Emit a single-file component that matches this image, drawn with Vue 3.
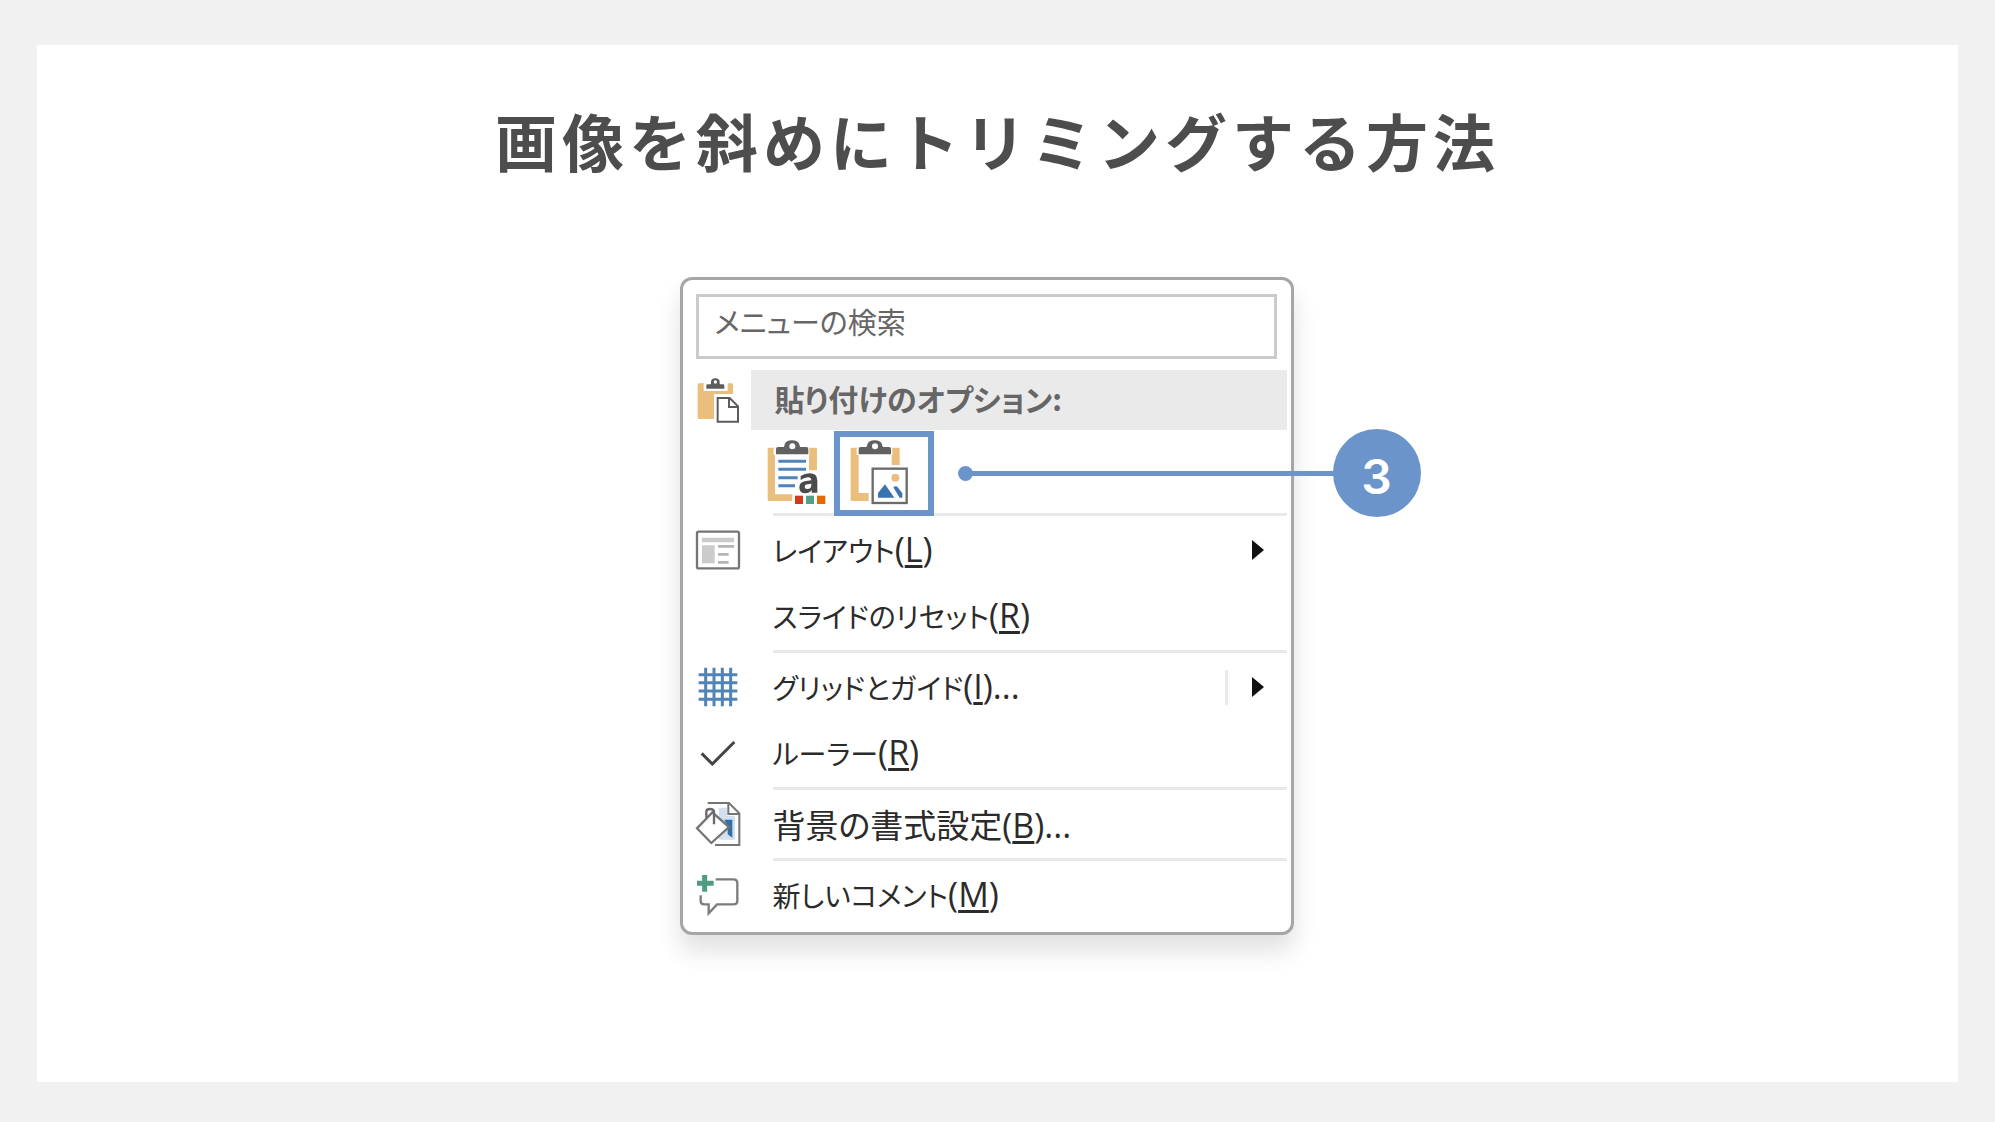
<script setup>
const title = '画像を斜めにトリミングする方法'

const groups = [
  [
    { icon: 'layout', label: 'レイアウト', key: 'L', arrow: true },
    { icon: '', label: 'スライドのリセット', key: 'R' },
  ],
  [
    { icon: 'grid', label: 'グリッドとガイド', key: 'I', more: true, arrow: true, split: true },
    { icon: 'check', label: 'ルーラー', key: 'R' },
  ],
  [{ icon: 'background', label: '背景の書式設定', key: 'B', more: true, kanji: true }],
  [{ icon: 'comment', label: '新しいコメント', key: 'M' }],
]
</script>

<template>
  <main class="page">
    <section class="panel">
      <h1 class="title">{{ title }}</h1>

      <div class="menu">
        <input class="search" type="text" placeholder="メニューの検索" aria-label="メニューの検索" />

        <div class="header">
          <span class="icon">
            <svg width="46" height="48" viewBox="0 0 138 144" aria-hidden="true">
              <path d="M8 26q0-4 4-4h16v22h70v-22h12q4 0 4 4v28H57v75H12q-4 0-4-4z" fill="#eabf7d" />
              <path d="M30 40V28h15v-6q0-12 16-12t16 12v6h15v12z" fill="#fff" stroke="#fff" stroke-width="8" />
              <path d="M34 38V29q0-4 4-4h10v-7q0-11 13-11t13 11v7h10q4 0 4 4v9z" fill="#5c5c5c" />
              <circle cx="61" cy="18" r="5" fill="#fff" />
              <path d="M68 66h36l25 25v46H68z" fill="#fff" stroke="#5c5c5c" stroke-width="6" />
              <path d="M102 66v27h27" fill="none" stroke="#5c5c5c" stroke-width="6" />
            </svg>
          </span>
          <span class="header-label">貼り付けのオプション:</span>
        </div>

        <div class="paste">
          <button class="paste-btn" type="button" aria-label="貼り付け先のテーマを使用">
            <svg width="60" height="66" viewBox="0 0 180 198" aria-hidden="true">
              <path d="M2 30q0-4 4-4h18v136h52v24H6q-4 0-4-4zM126 26h20q4 0 4 4v64h-24z" fill="#eabf7d" />
              <path d="M24 26h102v70l-30 70H24z" fill="#fff" />
              <path d="M20 48V28h24q4-24 31-24t32 24h20v20z" fill="#fff" />
              <path d="M27 46V30q0-6 6-6h17q3-3 3-8 4-12 22-12t22 12q0 5 3 8h18q6 0 6 6v16z" fill="#616161" />
              <circle cx="76" cy="22" r="9" fill="#fff" />
              <path d="M34 67h83M34 91h83M34 116h58M34 140h50" stroke="#4e84b8" stroke-width="9" />
              <path d="M101 111q12-8 27-8 23 0 23 22v36h-17v-8q-7 10-19 10-18 0-18-18 0-17 20-19l16-2q0-9-10-9-11 0-22 8zM133 134l-11 2q-9 1-9 8 0 6 8 6 12 0 12-13z" fill="#4b4b4b" fill-rule="evenodd" />
              <path d="M84 170h24v25H84z" fill="#d13b1c" />
              <path d="M117 170h24v25h-24z" fill="#53a086" />
              <path d="M150 170h25v25h-25z" fill="#e56a06" />
            </svg>
          </button>
          <button class="paste-btn selected" type="button" aria-label="図">
            <svg width="60" height="66" viewBox="0 0 180 198" aria-hidden="true">
              <path d="M2 30q0-4 4-4h20v136h30v24H6q-4 0-4-4zM125 26h20q4 0 4 4v48h-24z" fill="#eabf7d" />
              <path d="M20 48V28h24q4-24 31-24t32 24h20v20z" fill="#fff" />
              <path d="M26 46V30q0-6 6-6h17q3-3 3-8 4-12 22-12t22 12q0 5 3 8h18q6 0 6 6v16z" fill="#616161" />
              <circle cx="75" cy="22" r="9" fill="#fff" />
              <rect x="68" y="89" width="102" height="103" fill="#fff" stroke="#6b6b6b" stroke-width="7" />
              <circle cx="136" cy="116" r="12" fill="#eabf7d" />
              <path d="M84 176v-14l21-26 28 40z" fill="#3a74b0" />
              <path d="M130 145q6-6 12-2l15 20v13h-8z" fill="#3a74b0" />
            </svg>
          </button>

          <div class="callout">
            <span class="dot"></span>
            <span class="line"></span>
            <span class="badge">3</span>
          </div>
        </div>

        <template v-for="(group, g) in groups" :key="g">
          <hr class="rule" />
          <button v-for="item in group" :key="item.label" class="item" type="button">
            <span class="icon">
              <svg v-if="item.icon === 'layout'" width="46" height="40" viewBox="0 0 138 120" aria-hidden="true">
                <rect x="6" y="5" width="126" height="110" rx="5" fill="#fff" stroke="#757575" stroke-width="7" />
                <path d="M21 23h96v14H21zM21 46h38v54H21z" fill="#cbcbcb" />
                <path d="M69 49h48M69 73h32M69 97h32" stroke="#b4b4b4" stroke-width="8" />
              </svg>
              <svg v-else-if="item.icon === 'grid'" width="40" height="40" viewBox="0 0 120 120" aria-hidden="true">
                <path d="M23 2v116M48 2v116M73 2v116M98 2v116M2 23h116M2 47h116M2 72h116M2 97h116" stroke="#4e84b8" stroke-width="9" />
              </svg>
              <svg v-else-if="item.icon === 'check'" width="36" height="26" viewBox="0 0 108 78" aria-hidden="true">
                <path d="M5 40l32 32L103 6" fill="none" stroke="#444" stroke-width="9" />
              </svg>
              <svg v-else-if="item.icon === 'background'" width="46" height="46" viewBox="0 0 138 138" aria-hidden="true">
                <path d="M72 20h24v24h24v72H72z" fill="#d3e1ef" />
                <path d="M38 6h64l31 31v95H60" fill="none" stroke="#757575" stroke-width="6" />
                <path d="M100 6v33h33" fill="none" stroke="#757575" stroke-width="6" />
                <path d="M88 56h24v54l-14-10V76z" fill="#336fa9" />
                <path d="M52 34l50 44-53 48L6 82z" fill="#fff" stroke="#757575" stroke-width="7" />
                <path d="M34 50V32q0-8 11-8t12 8v38" fill="none" stroke="#6a6a6a" stroke-width="7" />
              </svg>
              <svg v-else-if="item.icon === 'comment'" width="46" height="42" viewBox="0 0 138 126" aria-hidden="true">
                <path d="M62 16h53q12 0 12 12v52q0 11-12 11H66l-25 27V91H29q-12 0-12-11V64" fill="none" stroke="#7c7c7c" stroke-width="7" />
                <path d="M29 3v50M6 28h50" stroke="#4f9c80" stroke-width="15" />
              </svg>
            </span>
            <span class="label" :class="{ kanji: item.kanji }">{{ item.label }}<span class="key">(<u>{{ item.key }}</u>)<template v-if="item.more">...</template></span></span>
            <span v-if="item.split" class="split"></span>
            <svg v-if="item.arrow" class="arrow" width="12" height="20" viewBox="0 0 12 20" aria-hidden="true">
              <path d="M0 0l12 10L0 20z" fill="#111" />
            </svg>
          </button>
        </template>
      </div>
    </section>
  </main>
</template>

<style>
body {
  margin: 0;
  background: #f1f1f1;
}
</style>

<style scoped>
.page {
  box-sizing: border-box;
  display: flex;
  min-height: 100vh;
  padding: 45px 37px 40px;
  background: #f1f1f1;
  font-family: "Noto Sans CJK JP", sans-serif;
}

.panel {
  flex: 1;
  display: flex;
  flex-direction: column;
  align-items: center;
  padding: 50px 0 80px;
  background: #fff;
}

.title {
  margin: 0 0 92px;
  color: #4d4d4d;
  font-size: 62px;
  font-weight: 700;
  line-height: 90px;
  letter-spacing: 5px;
}

.menu {
  box-sizing: border-box;
  display: flex;
  flex-direction: column;
  width: 614px;
  margin-right: 22px;
  padding: 14px 0 4px;
  border: 3px solid #a6a6a6;
  border-radius: 12px;
  background: #fff;
  box-shadow: 0 16px 24px rgba(0, 0, 0, 0.12);
  font-feature-settings: "palt";
}

.search {
  box-sizing: border-box;
  height: 65px;
  margin: 0 14px 11px 13px;
  padding: 0 16px 12px;
  border: 3px solid #cbcbcb;
  background: #fff;
  color: #555;
  font: inherit;
  font-size: 29px;
  font-feature-settings: inherit;
}

.search::placeholder {
  color: #666;
  opacity: 1;
}

.icon {
  box-sizing: border-box;
  display: flex;
  flex: 0 0 68px;
  align-items: center;
  justify-content: center;
  padding-left: 2px;
}

.header {
  display: flex;
  height: 60px;
  margin-right: 4px;
}

.header-label {
  flex: 1;
  padding-left: 24px;
  background: #eaeaea;
  color: #666;
  font-size: 30px;
  font-weight: 700;
  line-height: 56px;
  white-space: nowrap;
}

.paste {
  position: relative;
  display: flex;
  height: 82px;
  padding-left: 68px;
}

.paste-btn {
  position: relative;
  width: 83px;
  padding: 2px 0 0 16px;
  border: 0;
  background: none;
  text-align: left;
}

.paste-btn svg {
  display: block;
}

.selected {
  width: 100px;
}

.selected::after {
  content: "";
  position: absolute;
  inset: 1px 0 -4px;
  border: 6px solid #6b95ca;
}

.callout {
  position: absolute;
  top: -1px;
  left: 275px;
  display: flex;
  align-items: center;
  width: 463px;
}

.dot {
  width: 15px;
  height: 15px;
  border-radius: 50%;
  background: #6b95ca;
}

.line {
  flex: 1;
  height: 5px;
  margin: 0 -1px;
  background: #6b95ca;
}

.badge {
  width: 88px;
  height: 88px;
  border-radius: 50%;
  background: #6b95ca;
  color: #fff;
  font-family: Inter, sans-serif;
  font-size: 48px;
  font-weight: 600;
  line-height: 96px;
  text-align: center;
}

.rule {
  width: 514px;
  height: 3px;
  margin: 1px 4px 1px auto;
  border: 0;
  background: #e9e9e9;
}

.item {
  display: flex;
  align-items: center;
  height: 66px;
  padding: 0 27px 0 0;
  border: 0;
  background: none;
  color: #2b2b2b;
  font: inherit;
  font-feature-settings: inherit;
  text-align: left;
}

.label {
  flex: 1;
  padding-left: 22px;
  font-size: 28px;
  line-height: 64px;
  white-space: nowrap;
}

.kanji {
  font-size: 33px;
}

.key {
  font-family: "Open Sans", sans-serif;
  font-size: 34px;
  line-height: 1;
}

.key u {
  text-decoration-thickness: 3px;
  text-underline-offset: 3px;
}

.split {
  width: 3px;
  height: 35px;
  margin-right: 24px;
  background: #e9e9e9;
}
</style>
